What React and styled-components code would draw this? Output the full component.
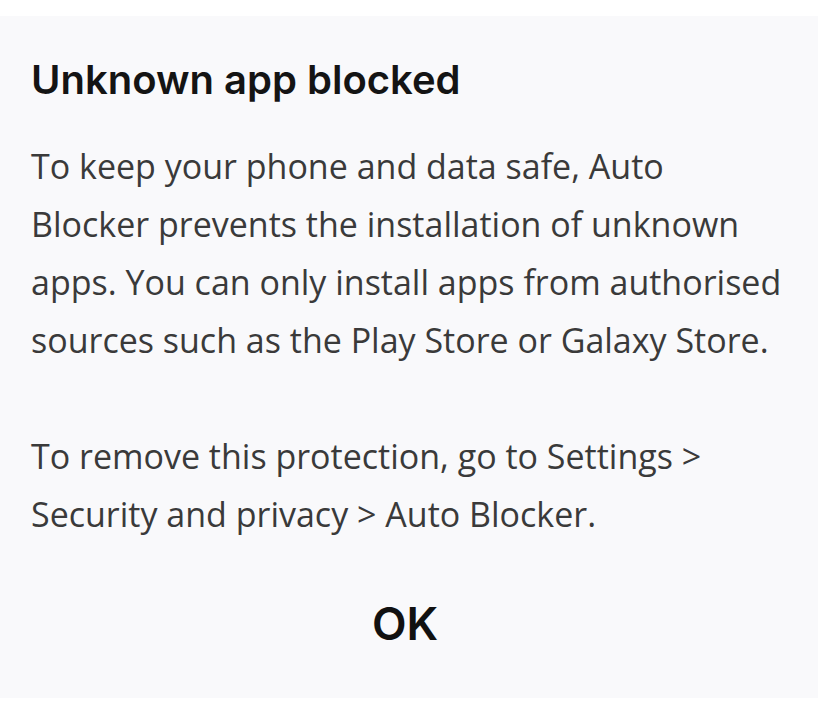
import React from 'react'
import styled, { createGlobalStyle } from 'styled-components'

const GlobalStyle = createGlobalStyle`
    html, body {
        margin: 0;
        padding: 0;
        background: #ffffff;
    }
    body {
        font-family: 'Open Sans', 'Liberation Sans', sans-serif;
    }
`

const Screen = styled.div`
    width: 822px;
    height: 714px;
    padding-top: 16px;
    box-sizing: border-box;
    overflow: hidden;
`

const Dialog = styled.div`
    width: 818px;
    height: 682px;
    background: #f9f9fb;
    box-sizing: border-box;
    padding: 40px 0 0 31px;
    display: flex;
    flex-direction: column;
`

const Title = styled.h1`
    margin: 0;
    font-family: 'Inter', 'Liberation Sans', sans-serif;
    font-size: 40px;
    font-weight: 600;
    line-height: 48px;
    color: #141414;
`

const Body = styled.p`
    margin: ${props => props.top}px 0 0 0;
    font-family: 'Open Sans', 'Liberation Sans', sans-serif;
    font-size: 34px;
    line-height: 58px;
    color: #3a3a3a;
    white-space: nowrap;
`

const Actions = styled.div`
    display: flex;
    justify-content: center;
    margin-top: 55px;
    padding-right: 39px;
`

const OkButton = styled.button`
    border: none;
    background: transparent;
    padding: 0;
    font-family: 'Inter', 'Liberation Sans', sans-serif;
    font-size: 45px;
    font-weight: 600;
    line-height: 52px;
    color: #111111;
    cursor: pointer;
`

export default function App() {
    return (
        <>
            <GlobalStyle />
            <Screen>
                <Dialog>
                    <Title>Unknown app blocked</Title>
                    <Body top={33}>
                        To keep your phone and data safe, Auto
                        <br />
                        Blocker prevents the installation of unknown
                        <br />
                        apps. You can only install apps from authorised
                        <br />
                        sources such as the Play Store or Galaxy Store.
                    </Body>
                    <Body top={58}>
                        To remove this protection, go to Settings &gt;
                        <br />
                        Security and privacy &gt; Auto Blocker.
                    </Body>
                    <Actions>
                        <OkButton>OK</OkButton>
                    </Actions>
                </Dialog>
            </Screen>
        </>
    )
}
